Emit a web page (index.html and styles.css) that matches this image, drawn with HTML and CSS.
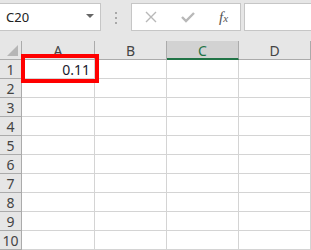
FILE: index.html
```html
<!DOCTYPE html>
<html>
<head>
    <title>Sheet</title>
    <meta charset="UTF-8">
    <link rel="stylesheet" href="styles.css">
</head>
<body>
    <div class="toolbar">
        <div class="name-box">
            <span>C20</span>
            <span class="caret"></span>
        </div>
        <div class="grip"><i></i><i></i><i></i></div>
        <div class="fx-box">
            <svg class="tool-icon" width="12" height="12" viewBox="0 0 12 12">
                <path d="M1 1 L11 11 M11 1 L1 11" stroke="#b8b8b8" stroke-width="1.4" fill="none"/>
            </svg>
            <svg class="tool-icon" width="14" height="12" viewBox="0 0 14 12">
                <path d="M1 6 L5 10 L13 2" stroke="#b8b8b8" stroke-width="2.4" fill="none"/>
            </svg>
            <span class="fx">f<sub>x</sub></span>
        </div>
        <div class="formula-input"></div>
    </div>

    <div class="sheet">
        <div class="grid">
            <div class="corner"><span class="corner-mark"></span></div>
            <div class="col-head">A</div>
            <div class="col-head">B</div>
            <div class="col-head selected">C</div>
            <div class="col-head">D</div>

            <div class="row-head">1</div><div class="cell num">0.11</div><div class="cell"></div><div class="cell"></div><div class="cell"></div>
            <div class="row-head">2</div><div class="cell"></div><div class="cell"></div><div class="cell"></div><div class="cell"></div>
            <div class="row-head">3</div><div class="cell"></div><div class="cell"></div><div class="cell"></div><div class="cell"></div>
            <div class="row-head">4</div><div class="cell"></div><div class="cell"></div><div class="cell"></div><div class="cell"></div>
            <div class="row-head">5</div><div class="cell"></div><div class="cell"></div><div class="cell"></div><div class="cell"></div>
            <div class="row-head">6</div><div class="cell"></div><div class="cell"></div><div class="cell"></div><div class="cell"></div>
            <div class="row-head">7</div><div class="cell"></div><div class="cell"></div><div class="cell"></div><div class="cell"></div>
            <div class="row-head">8</div><div class="cell"></div><div class="cell"></div><div class="cell"></div><div class="cell"></div>
            <div class="row-head">9</div><div class="cell"></div><div class="cell"></div><div class="cell"></div><div class="cell"></div>
            <div class="row-head">10</div><div class="cell"></div><div class="cell"></div><div class="cell"></div><div class="cell"></div>
        </div>
        <div class="highlight"></div>
    </div>
</body>
</html>
```

FILE: styles.css
```css
html {
    font-family: "Noto Sans", "Liberation Sans", sans-serif;
}
body {
    margin: 0;
    width: 311px;
    height: 250px;
    overflow: hidden;
    background-color: #e6e6e6;
}
.toolbar {
    display: flex;
    align-items: flex-start;
    height: 41px;
    padding-top: 3px;
    box-sizing: border-box;
}
.name-box {
    width: 101px;
    height: 28px;
    box-sizing: border-box;
    background-color: #fff;
    border: 1px solid #c6c6c6;
    border-left: none;
    display: flex;
    align-items: center;
    justify-content: space-between;
    padding: 0 6px 0 6px;
    font-size: 13px;
    color: #222;
}
.caret {
    width: 0;
    height: 0;
    border-left: 4px solid transparent;
    border-right: 4px solid transparent;
    border-top: 4px solid #666;
    margin-top: -2px;
}
.grip {
    width: 30px;
    display: flex;
    flex-direction: column;
    align-items: center;
    gap: 3px;
    padding-top: 9px;
}
.grip i {
    width: 2px;
    height: 2px;
    background-color: #a8a8a8;
}
.fx-box {
    width: 110px;
    height: 28px;
    box-sizing: border-box;
    background-color: #fff;
    border: 1px solid #c6c6c6;
    display: flex;
    align-items: center;
    padding-left: 13px;
}
.tool-icon {
    margin-right: 24px;
}
.fx {
    font-family: "Liberation Serif", serif;
    font-style: italic;
    font-size: 15px;
    color: #555;
    margin-left: 0;
}
.fx sub {
    font-size: 11px;
    vertical-align: 0;
}
.formula-input {
    margin-left: 3px;
    flex: 1;
    height: 28px;
    box-sizing: border-box;
    background-color: #fff;
    border: 1px solid #c6c6c6;
    border-right: none;
}
.sheet {
    position: relative;
    background-color: #fff;
}
.grid {
    display: grid;
    grid-template-columns: 22px 73px 72px 72px 72px;
    grid-template-rows: 19px;
    grid-auto-rows: 19px;
}
.grid > div {
    box-sizing: border-box;
}
.corner {
    background-color: #e6e6e6;
    border-right: 1px solid #ababab;
    border-bottom: 1px solid #ababab;
    position: relative;
}
.corner-mark {
    position: absolute;
    right: 3px;
    bottom: 3px;
    width: 0;
    height: 0;
    border-left: 11px solid transparent;
    border-bottom: 11px solid #b6b6b6;
}
.col-head {
    background-color: #e6e6e6;
    border-right: 1px solid #ababab;
    border-bottom: 1px solid #ababab;
    text-align: center;
    font-size: 14px;
    line-height: 20px;
    color: #444;
}
.col-head.selected {
    background-color: #d2d2d2;
    border-bottom: 2px solid #217346;
    color: #217346;
}
.row-head {
    background-color: #e6e6e6;
    border-right: 1px solid #ababab;
    border-bottom: 1px solid #ababab;
    text-align: center;
    font-size: 14px;
    line-height: 19px;
    color: #444;
}
.cell {
    border-right: 1px solid #d4d4d4;
    border-bottom: 1px solid #d4d4d4;
}
.cell.num {
    text-align: right;
    padding-right: 4px;
    font-size: 14px;
    line-height: 19px;
    color: #1a1a2e;
}
.highlight {
    position: absolute;
    left: 21px;
    top: 13px;
    width: 78px;
    height: 29px;
    box-sizing: border-box;
    border: 4px solid #ff0000;
}
```
